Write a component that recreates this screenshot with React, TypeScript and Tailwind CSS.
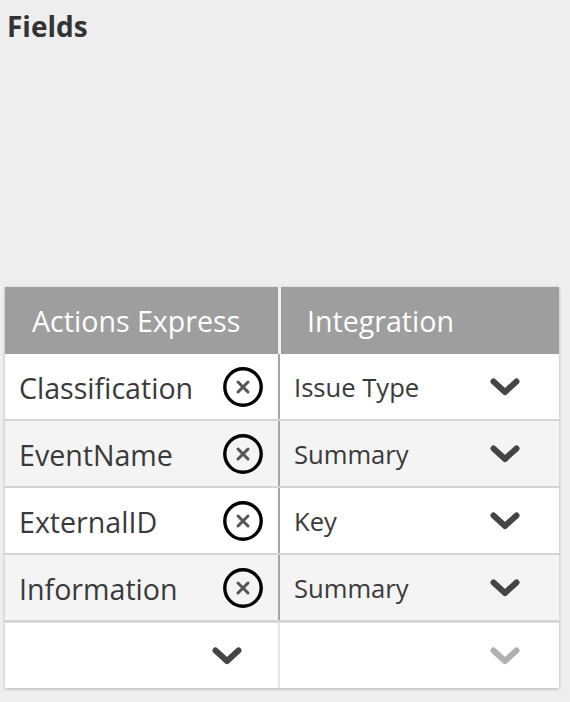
const rows = [
  { source: 'Classification', target: 'Issue Type' },
  { source: 'EventName', target: 'Summary' },
  { source: 'ExternalID', target: 'Key' },
  { source: 'Information', target: 'Summary' },
];

function RemoveIcon() {
  return (
    <svg width="40" height="40" viewBox="0 0 40 40" fill="none" aria-hidden="true">
      <circle cx="20" cy="20" r="18.2" stroke="#000" strokeWidth="3.4" />
      <path d="M15 15l10 10M25 15l-10 10" stroke="#555" strokeWidth="3" strokeLinecap="round" />
    </svg>
  );
}

function Chevron({ color = '#444' }: { color?: string }) {
  return (
    <svg width="30" height="18" viewBox="0 0 30 18" fill="none" aria-hidden="true">
      <path d="M3.5 3.5l11.5 10.5 11.5-10.5" stroke={color} strokeWidth="6" strokeLinecap="round" strokeLinejoin="round" />
    </svg>
  );
}

export default function App() {
  return (
    <div className="h-[702px] w-full bg-[#eeeeee] font-['Open_Sans',sans-serif] text-[#3a3a3a]">
      <h1 className="px-[7px] pt-[6px] text-[28px] leading-[40px] font-bold text-[#333]">Fields</h1>

      <div className="mt-[241px] ml-[5px] w-[554px] bg-white shadow-[0_1px_3px_rgba(0,0,0,0.25)]">
        {/* header */}
        <div className="flex h-[67px] bg-[#9e9e9e] text-[28.6px] text-white">
          <div className="flex w-[276px] items-center border-r-[3px] border-[#f2f2f2] pt-[2px] pl-[27px]">Actions Express</div>
          <div className="flex flex-1 items-center pt-[2px] pl-[26px]">Integration</div>
        </div>

        {rows.map((row, i) => (
          <div
            key={row.source}
            className={
              i % 2 === 0
                ? 'flex h-[67px] border-b-2 border-[#d4d4d4] bg-white'
                : 'flex h-[67px] border-b-2 border-[#d4d4d4] bg-[#f4f4f4]'
            }
          >
            <div className="flex w-[275px] items-center justify-between border-r-2 border-[#a6a6a6] pr-[15px] pl-[14px] text-[28.6px]">
              <span className="pt-[3px]">{row.source}</span>
              <RemoveIcon />
            </div>
            <div className="flex flex-1 items-center justify-between pr-[39px] pl-[14px] text-[25.6px]">
              <span className="pt-[4px]">{row.target}</span>
              <Chevron />
            </div>
          </div>
        ))}

        {/* empty row */}
        <div className="flex h-[66px] border-t border-[#dcdcdc] bg-white">
          <div className="flex w-[275px] items-center justify-end border-r-2 border-[#e6e6e6] pr-[36px]">
            <Chevron />
          </div>
          <div className="flex flex-1 items-center justify-end pr-[39px]">
            <Chevron color="#b0b0b0" />
          </div>
        </div>
      </div>
    </div>
  );
}
